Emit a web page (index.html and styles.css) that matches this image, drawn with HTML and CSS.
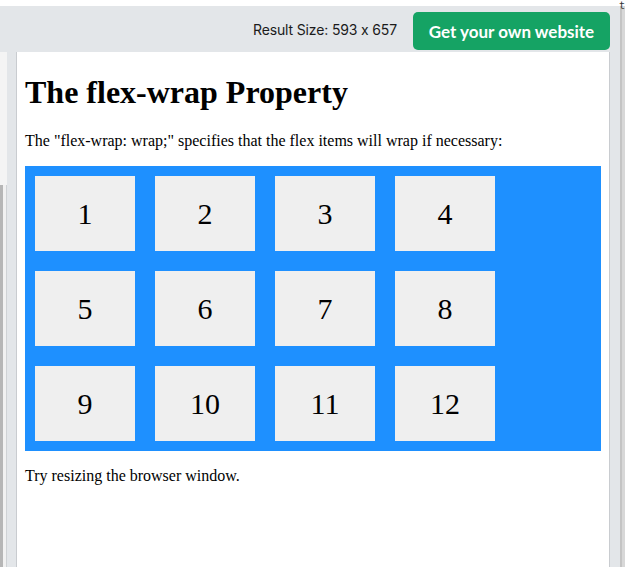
FILE: index.html
```html
<!DOCTYPE html>
<html>
<head>
<meta charset="utf-8">
<link rel="stylesheet" href="styles.css">
</head>
<body>
<div class="app">
  <div class="topline"><span class="glyph">t</span></div>
  <div class="main">
    <div class="leftpane"><div class="scroll"></div></div>
    <div class="center">
      <div class="toolbar">
        <span class="size">Result Size: 593 x 657</span>
        <a class="btn">Get your own website</a>
      </div>
      <div class="frame">
        <h1 class="title">The flex-wrap Property</h1>
        <p class="text">The "flex-wrap: wrap;" specifies that the flex items will wrap if necessary:</p>
        <div class="flex-container">
          <div class="item">1</div>
          <div class="item">2</div>
          <div class="item">3</div>
          <div class="item">4</div>
          <div class="item">5</div>
          <div class="item">6</div>
          <div class="item">7</div>
          <div class="item">8</div>
          <div class="item">9</div>
          <div class="item">10</div>
          <div class="item">11</div>
          <div class="item">12</div>
        </div>
        <p class="text">Try resizing the browser window.</p>
      </div>
    </div>
    <div class="rightpane"></div>
  </div>
</div>
</body>
</html>
```
FILE: styles.css
```css
html, body {
  margin: 0;
  padding: 0;
  background: #ffffff;
}
.app {
  width: 625px;
  height: 567px;
  display: flex;
  flex-direction: column;
  overflow: hidden;
}
.topline {
  height: 6px;
  background: #ffffff;
  position: relative;
  z-index: 2;
}
.glyph {
  position: absolute;
  right: 0;
  top: 1px;
  font-family: "DejaVu Sans Mono", monospace;
  font-size: 10px;
  line-height: 10px;
  color: #333;
}
.main {
  flex: 1;
  display: flex;
  background: #e3e6e9;
  min-height: 0;
}
.leftpane {
  width: 7px;
  flex: none;
  display: flex;
  flex-direction: column;
}
.scroll {
  margin-top: 46px;
  flex: 1;
  background: linear-gradient(to bottom, #f4f4f4 0, #f4f4f4 133px, transparent 133px),
              linear-gradient(to right, #b6b6b6 0, #b6b6b6 3px, #f1f1f1 3px, #f1f1f1 6px, #cfd2d5 6px);
}
.center {
  flex: 1;
  display: flex;
  flex-direction: column;
  padding: 0 10px 0 9px;
  min-width: 0;
}
.toolbar {
  height: 46px;
  flex: none;
  display: flex;
  align-items: center;
  justify-content: flex-end;
  gap: 16px;
}
.size {
  font-family: "Inter", "Noto Sans", sans-serif;
  font-size: 14px;
  color: #1b1b1b;
  letter-spacing: -0.15px;
}
.btn {
  display: flex;
  align-items: center;
  justify-content: center;
  height: 38px;
  width: 197px;
  box-sizing: border-box;
  background: #15a364;
  color: #ffffff;
  border-radius: 5px;
  font-family: "Lato", "Open Sans", sans-serif;
  font-weight: 700;
  font-size: 17px;
  margin-top: 4px;
}
.frame {
  flex: 1;
  background: #ffffff;
  border-left: 1px solid #c9ccd0;
  border-right: 1px solid #c9ccd0;
  padding: 22px 8px 0 8px;
  font-family: "Liberation Serif", "Times New Roman", serif;
  color: #000;
  min-height: 0;
}
.title {
  font-size: 32px;
  font-weight: bold;
  margin: 0 0 21.44px 0;
}
.text {
  font-size: 16px;
  margin: 0 0 16px 0;
}
.flex-container {
  display: flex;
  flex-wrap: wrap;
  background-color: #1e90ff;
  margin-bottom: 16px;
}
.item {
  background-color: #efefef;
  width: 100px;
  margin: 10px;
  text-align: center;
  line-height: 75px;
  font-size: 30px;
}
.rightpane {
  width: 5px;
  flex: none;
  border-left: 2px solid #c4c4c4;
  background: #d8d8d8;
  box-sizing: border-box;
}
```
